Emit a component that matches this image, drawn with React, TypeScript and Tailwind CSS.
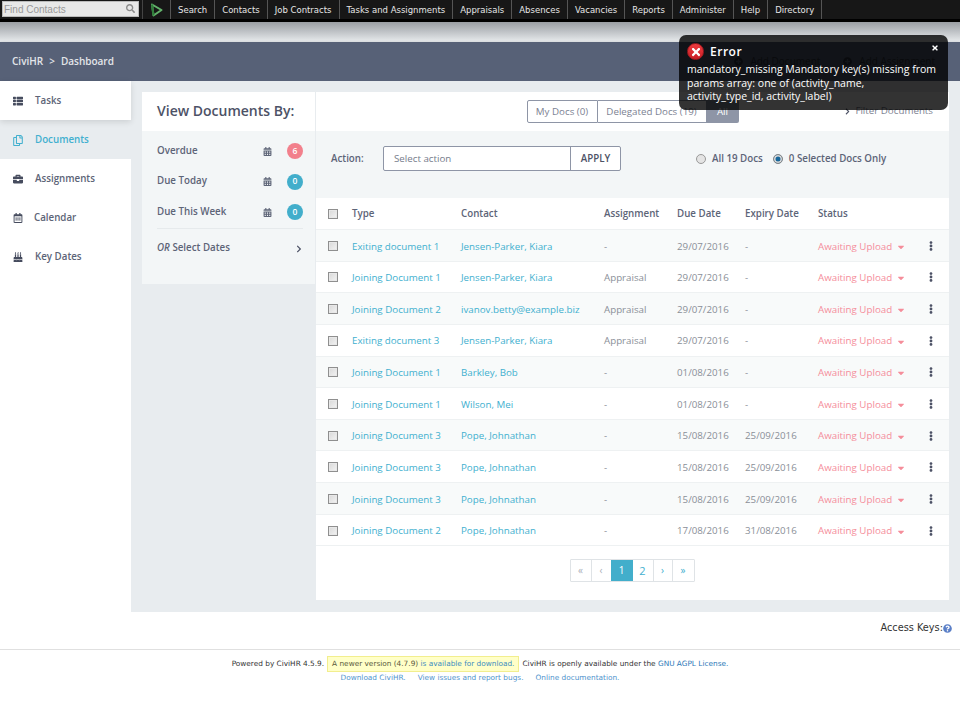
import React from 'react';
import {
  FaThList,
  FaRegCopy,
  FaBriefcase,
  FaRegCalendarAlt,
  FaBirthdayCake,
  FaCalendarAlt,
  FaChevronRight,
  FaEllipsisV,
  FaSearch,
  FaPlusCircle,
  FaCaretDown,
  FaQuestionCircle,
  FaTimes,
} from 'react-icons/fa';

const menu = ['Search', 'Contacts', 'Job Contracts', 'Tasks and Assignments', 'Appraisals', 'Absences', 'Vacancies', 'Reports', 'Administer', 'Help', 'Directory'];

const sideItems = [
  { label: 'Tasks', icon: FaThList, gap: 'gap-3' },
  { label: 'Documents', icon: FaRegCopy, gap: 'gap-3', active: true },
  { label: 'Assignments', icon: FaBriefcase, gap: 'gap-3' },
  { label: 'Calendar', icon: FaRegCalendarAlt, gap: 'gap-[11px]' },
  { label: 'Key Dates', icon: FaBirthdayCake, gap: 'gap-3' },
];

const docs = [
  ['Exiting document 1', 'Jensen-Parker, Kiara', '-', '29/07/2016', '-'],
  ['Joining Document 1', 'Jensen-Parker, Kiara', 'Appraisal', '29/07/2016', '-'],
  ['Joining Document 2', 'ivanov.betty@example.biz', 'Appraisal', '29/07/2016', '-'],
  ['Exiting document 3', 'Jensen-Parker, Kiara', 'Appraisal', '29/07/2016', '-'],
  ['Joining Document 1', 'Barkley, Bob', '-', '01/08/2016', '-'],
  ['Joining Document 1', 'Wilson, Mei', '-', '01/08/2016', '-'],
  ['Joining Document 3', 'Pope, Johnathan', '-', '15/08/2016', '25/09/2016'],
  ['Joining Document 3', 'Pope, Johnathan', '-', '15/08/2016', '25/09/2016'],
  ['Joining Document 3', 'Pope, Johnathan', '-', '15/08/2016', '25/09/2016'],
  ['Joining Document 2', 'Pope, Johnathan', '-', '17/08/2016', '31/08/2016'],
];

const Check = () => (
  <span className="block w-[10px] h-[10px] border border-[#8f8f8f] bg-gradient-to-br from-[#d8d8d8] to-[#f4f4f4] shadow-[inset_0_0_0_1px_#e8e8e8]" />
);

const App: React.FC = () => {
  return (
    <div className="relative w-[960px] h-[705px] overflow-hidden bg-white font-['Open_Sans',sans-serif] text-[#4d4d69]">
      {/* top menu */}
      <div className="flex items-start h-[22px] bg-[#171717] border-b-[3px] border-black pl-[2px]">
        <div className="relative mt-[1px] w-[137px] h-[16px] bg-[#e8e8e8] border border-[#bbb] pl-[1px] font-['Liberation_Sans',sans-serif] text-[10px] leading-[15px] text-[#999]">
          Find Contacts
          <FaSearch className="absolute right-[3px] top-[2px] text-[9px] text-[#8c8c8c]" />
        </div>
        <div className="ml-[3px] w-[28px] h-[19px] border-l border-[#444] flex items-center justify-center">
          <svg width="13" height="14" viewBox="0 0 13 14">
            <path d="M2 1.5 L11.5 7 L3.5 12.5 Z" fill="none" stroke="#63b26b" strokeWidth="2" strokeLinejoin="round" />
            <path d="M2 1.5 L3.5 12.5" fill="none" stroke="#2f7d3a" strokeWidth="2" />
          </svg>
        </div>
        <div className="flex h-[19px] font-['DejaVu_Sans',sans-serif] text-[8.5px] leading-[21px] text-[#e6e6e6]">
          {menu.map((m) => (
            <div key={m} className="px-[7px] border-l border-[#555] last:border-r">{m}</div>
          ))}
        </div>
      </div>
      <div className="h-[20px] bg-gradient-to-b from-[#9a9ea3] to-[#e9ecee]" />

      {/* breadcrumb bar */}
      <div className="flex items-center justify-between h-[39px] bg-[#576177] pl-3 pr-[25px] text-[10px] font-semibold text-[#e3e6ea] shadow-[0_1px_3px_rgba(0,0,0,0.3)]">
        <div className="flex gap-[6px]">
          <span>CiviHR</span>
          <span>&gt;</span>
          <span>Dashboard</span>
        </div>
        <div className="flex gap-[23px] text-[#2d3240] font-normal">
          <span className="flex items-center gap-[7px]"><FaPlusCircle className="text-[9px]" />Add Document</span>
          <span className="flex items-center gap-[7px]"><FaPlusCircle className="text-[9px]" />Add Assignment</span>
        </div>
      </div>

      <div className="flex h-[531px] bg-[#e8ecef]">
        {/* sidebar */}
        <div className="w-[131px] shrink-0 bg-white">
          {sideItems.map((s) => {
            const Icon = s.icon;
            return (
              <div
                key={s.label}
                className={
                  s.active
                    ? `flex items-center ${s.gap} h-[39px] pl-[13px] pt-px text-[9.75px] font-semibold bg-[#e8ecef] text-[#42b0cf]`
                    : `flex items-center ${s.gap} h-[39px] pl-[13px] pt-px text-[9.75px] font-semibold text-[#5d6477] first:relative first:z-10 first:shadow-[0_2px_6px_rgba(0,0,0,0.12)]`
                }
              >
                <Icon className={s.active ? 'text-[11px] w-[10px]' : 'text-[10px] w-[10px] text-[#464c5e]'} />
                <span>{s.label}</span>
              </div>
            );
          })}
        </div>

        {/* content */}
        <div className="flex items-start pl-[11px] pt-[11px]">
          {/* filter column */}
          <div className="w-[173px] mr-[1px]">
            <div className="h-[39px] bg-white pl-[15px] pt-[9px] text-[14px] leading-[20px] font-semibold text-[#4d5266]">View Documents By:</div>
            <div className="h-[153px] bg-[#f3f6f7] pl-[15px] pr-3 text-[9.75px] font-semibold text-[#5d6477]">
              <div className="h-[98px] pt-[5px] border-b border-[#e6eaec]">
                {[
                  { t: 'Overdue', n: 6, c: 'bg-[#f2808c]' },
                  { t: 'Due Today', n: 0, c: 'bg-[#42aecb]' },
                  { t: 'Due This Week', n: 0, c: 'bg-[#42aecb]' },
                ].map((r) => (
                  <div key={r.t} className="flex items-center h-[30.5px]">
                    <span className="flex-1">{r.t}</span>
                    <FaCalendarAlt className="text-[9px] text-[#5d6477] mr-[15px]" />
                    <span className={`flex items-center justify-center w-4 h-4 rounded-full text-[8.5px] text-white ${r.c}`}>{r.n}</span>
                  </div>
                ))}
              </div>
              <div className="flex items-center justify-between h-[36px] pt-[3px]">
                <span><i className="font-semibold">OR</i> Select Dates</span>
                <FaChevronRight className="text-[8px] text-[#4d5266]" />
              </div>
            </div>
          </div>

          {/* documents */}
          <div className="w-[633px] h-[508px] bg-white">
            <div className="relative flex justify-center h-[39px] pt-2 text-[9.75px] text-[#7c8292]">
              <div className="flex h-[23px]">
                <span className="w-[71px] text-center leading-[21px] border border-[#8e95a6] rounded-l-[2px]">My Docs (0)</span>
                <span className="w-[109px] text-center leading-[21px] border-y border-r border-[#8e95a6]">Delegated Docs (19)</span>
                <span className="w-[32px] text-center leading-[23px] bg-[#8e95a6] text-white rounded-r-[2px]">All</span>
              </div>
              <span className="absolute right-4 top-[12px] flex items-center gap-1">
                <FaChevronRight className="text-[7px] text-[#4d5266]" />Filter Documents
              </span>
            </div>

            <div className="flex items-center h-[67px] bg-[#f3f6f7] pl-[15px] pb-[13px] text-[9.75px] font-semibold text-[#5d6477]">
              <span className="w-[52px] pt-[2px]">Action:</span>
              <div className="flex w-[238px] h-[25px] border border-[#8e95a6] rounded-[2px] bg-white">
                <span className="flex-1 pl-[10px] leading-[23px] font-normal text-[#767c8c]">Select action</span>
                <span className="w-[50px] text-center leading-[23px] border-l border-[#8e95a6] text-[#4d5266]">APPLY</span>
              </div>
              <div className="flex items-center ml-[75px] pt-[2px]">
                <span className="w-[10px] h-[10px] rounded-full border border-[#999] bg-[#e4e4e4]" />
                <span className="ml-[6px]">All 19 Docs</span>
                <span className="ml-[10px] w-[10px] h-[10px] rounded-full border border-[#888] bg-[#17679b] shadow-[inset_0_0_0_1.5px_#dcdcdc]" />
                <span className="ml-[6px]">0 Selected Docs Only</span>
              </div>
            </div>

            {/* table */}
            <div className="flex items-center h-[32px] pl-3 text-[9.75px] font-semibold text-[#5d6477] border-b border-[#eef1f2]">
              <span className="w-6"><Check /></span>
              <span className="w-[109px] pt-[2px]">Type</span>
              <span className="w-[143px] pt-[2px]">Contact</span>
              <span className="w-[73px] pt-[2px]">Assignment</span>
              <span className="w-[68px] pt-[2px]">Due Date</span>
              <span className="w-[73px] pt-[2px]">Expiry Date</span>
              <span className="pt-[2px]">Status</span>
            </div>
            {docs.map((d, i) => (
              <div key={i} className={`flex items-center h-[31.65px] pl-3 pt-[3px] text-[9.75px] border-b border-[#eef1f2] ${i % 2 === 0 ? 'bg-[#f8fafa]' : 'bg-white'}`}>
                <span className="w-6 -mt-[2px]"><Check /></span>
                <span className="w-[109px] text-[#42b0cf]">{d[0]}</span>
                <span className="w-[143px] text-[#42b0cf]">{d[1]}</span>
                <span className="w-[73px] text-[#8a8f98]">{d[2]}</span>
                <span className="w-[68px] text-[#8a8f98]">{d[3]}</span>
                <span className="w-[73px] text-[#8a8f98]">{d[4]}</span>
                <span className="w-[108px] flex items-center gap-1 text-[#f58d9a]">Awaiting Upload<FaCaretDown className="text-[10px]" /></span>
                <FaEllipsisV className="text-[10px] text-[#4d5266] -mt-[2px]" />
              </div>
            ))}

            {/* pagination */}
            <div className="flex justify-center mt-[13px] ml-[-1px] text-[10px] text-[#42b0cf]">
              <div className="flex h-[23px] border border-[#dfe3e6] rounded-[1px]">
                <span className="w-[21px] text-center leading-[21px] text-[#a9afb8] border-r border-[#dfe3e6]">«</span>
                <span className="w-[19px] text-center leading-[21px] text-[#a9afb8]">‹</span>
                <span className="w-[22px] text-center leading-[21px] bg-[#42aecb] text-white">1</span>
                <span className="w-[21px] text-center leading-[21px] border-r border-[#dfe3e6] text-[11px]">2</span>
                <span className="w-[19px] text-center leading-[21px] border-r border-[#dfe3e6]">›</span>
                <span className="w-[21px] text-center leading-[21px]">»</span>
              </div>
            </div>
          </div>
        </div>
      </div>

      {/* access keys */}
      <div className="flex items-center justify-end h-[38px] pb-[5px] pr-[8px] border-b border-[#e0e0e0] font-['DejaVu_Sans',sans-serif] text-[9.75px] text-[#333]">
        Access Keys:<FaQuestionCircle className="text-[9px] text-[#5b7fc7]" />
      </div>

      {/* footer */}
      <div className="pt-[6px] text-center font-['DejaVu_Sans',sans-serif] text-[7.35px] leading-[14px] text-[#333]">
        <div className="flex justify-center items-center h-[15px]">
          <span>Powered by CiviHR 4.5.9.</span>
          <span className="mx-[3px] px-1 h-4 leading-[14px] bg-[#ffffc8] border border-[#f2ee8e] text-[#5a5a3c]">
            A newer version (4.7.9) <span className="text-[#3c8dc0]">is available for download.</span>
          </span>
          <span>CiviHR is openly available under the <span className="text-[#2a78b8]">GNU AGPL License.</span></span>
        </div>
        <div className="flex justify-center gap-[12px] text-[#4f94cd]">
          <span>Download CiviHR.</span>
          <span>View issues and report bugs.</span>
          <span>Online documentation.</span>
        </div>
      </div>

      {/* error toast */}
      <div className="absolute left-[679px] top-[35px] w-[269px] h-[75px] rounded-[7px] bg-black/80 pl-2 pr-2 pt-2 text-[10.5px] leading-[13.5px] text-white">
        <div className="flex items-center h-[17px]">
          <span className="flex items-center justify-center w-[17px] h-[17px] rounded-full bg-gradient-to-b from-[#ee3b3f] to-[#c81e26] border border-[#a01a20]">
            <FaTimes className="text-[12px] text-white" />
          </span>
          <span className="ml-[6px] text-[12px] font-semibold tracking-[0.5px]">Error</span>
        </div>
        <div className="absolute right-[9px] top-[9px] text-[8px]"><FaTimes /></div>
        <p className="mt-[3px]">mandatory_missing Mandatory key(s) missing from params array: one of (activity_name, activity_type_id, activity_label)</p>
      </div>
    </div>
  );
};

export default App;
